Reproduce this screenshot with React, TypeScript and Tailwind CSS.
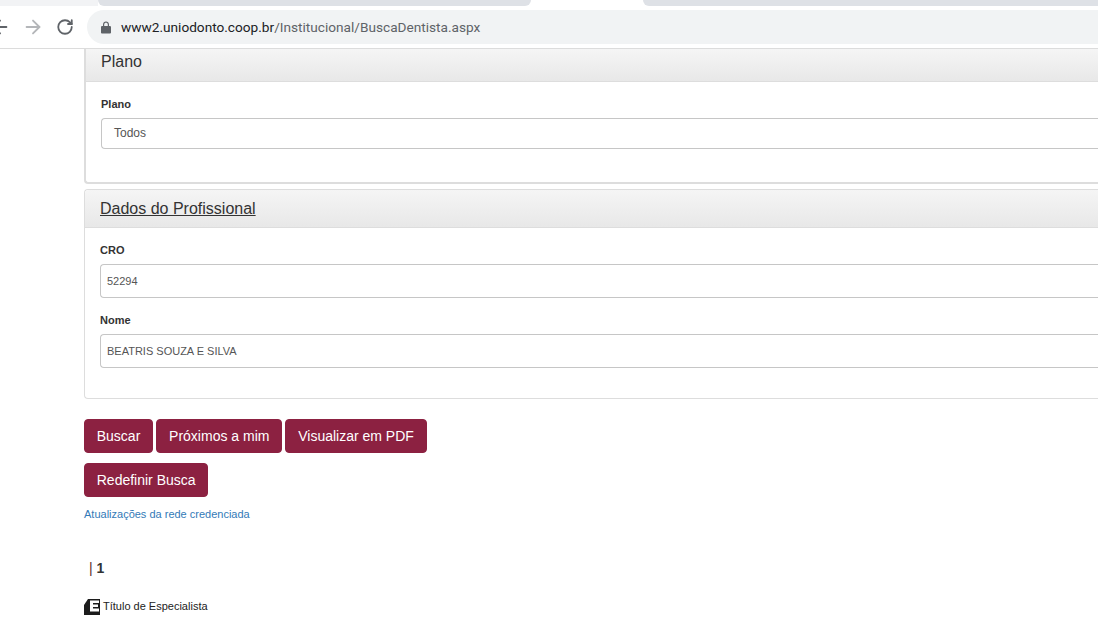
import { ArrowLeft, ArrowRight, RotateCw } from 'lucide-react'

const font = { fontFamily: '"Liberation Sans", Arial, sans-serif' }

// ── Browser chrome ─────────────────────────────────────────────────────────

function BrowserBar() {
  return (
    <div className="h-[49px] bg-white border-b border-[#dcdcdc] overflow-hidden">
      <div className="h-[6px] bg-white flex">
        <div className="w-[98px] bg-[#f2f3f5]" />
        <div className="w-[433px] bg-[#dee1e6] rounded-b-lg" />
        <div className="w-[112px]" />
        <div className="flex-1 bg-[#dee1e6] rounded-bl-lg" />
      </div>
      <div className="flex items-center h-[34px] mt-[4px]">
        <div className="w-[87px] flex items-center shrink-0 text-[#5f6368]">
          <ArrowLeft size={22} strokeWidth={2} className="ml-[-11px] shrink-0" />
          <ArrowRight size={22} strokeWidth={2} className="ml-[11px] shrink-0 text-[#b4b6b9]" />
          <RotateCw size={18} strokeWidth={2.4} className="ml-[12px] shrink-0" />
        </div>
        <div className="flex-1 h-[34px] bg-[#f1f3f4] rounded-l-[17px] flex items-center pl-[14px]">
          <svg width="10" height="13" viewBox="0 0 10 13" className="shrink-0" fill="#5f6368">
            <path d="M1.2 5H2V3.4C2 1.7 3.3.5 5 .5S8 1.7 8 3.4V5h.8c.6 0 1.2.5 1.2 1.1v5.3c0 .6-.6 1.1-1.2 1.1H1.2C.6 12.5 0 12 0 11.4V6.1C0 5.5.6 5 1.2 5ZM3.2 5h3.6V3.4C6.8 2.4 6 1.7 5 1.7S3.2 2.4 3.2 3.4Z" fillRule="evenodd" />
          </svg>
          <span className="ml-[10px] text-[13.65px] text-[#202124]" style={{ fontFamily: 'Roboto, sans-serif' }}>
            www2.uniodonto.coop.br<span className="text-[#5f6368]">/Institucional/BuscaDentista.aspx</span>
          </span>
        </div>
      </div>
    </div>
  )
}

// ── Form pieces ────────────────────────────────────────────────────────────

function Field({ label, value, small }: { label: string; value: string; small?: boolean }) {
  return (
    <div>
      <div className="text-[11px] leading-[16px] font-bold text-[#333]">{label}</div>
      <div
        className={`mt-[6px] bg-white border border-[#c6c6c6] rounded-l-[4px] border-r-0 flex items-center ${
          small ? 'h-[34px] pl-[6px] text-[11px]' : 'h-[31px] pl-[12px] text-[12px] pb-[2px]'
        } text-[#555]`}
      >
        {value}
      </div>
    </div>
  )
}

function PanelHeader({ title, underline, className }: { title: string; underline?: boolean; className: string }) {
  return (
    <div className={`bg-gradient-to-b from-[#f5f5f5] to-[#e8e8e8] border-b border-[#ddd] flex items-center text-[16px] text-[#333] ${className}`}>
      <span className={underline ? 'underline' : ''}>{title}</span>
    </div>
  )
}

function MaroonButton({ children, wide }: { children: string; wide?: boolean }) {
  return (
    <button className={`h-[34px] ${wide ? 'px-[12px]' : 'px-[11.75px]'} bg-[#8c2141] border border-[#8c2141] rounded-[4px] text-white text-[14px]`}>
      {children}
    </button>
  )
}

function SpecialistIcon() {
  return (
    <svg width="16" height="16" viewBox="0 0 16 16" className="shrink-0 block">
      <path d="M0 16V6L4 0H16V16Z" fill="#1c1c1c" />
      <path d="M6 1.5H15V4H9V5.5H14V8H9V9.5H15V12.5H6Z" fill="#fff" />
    </svg>
  )
}

// ── Page ───────────────────────────────────────────────────────────────────

export default function App() {
  return (
    <div className="w-[1098px] h-[630px] overflow-hidden bg-white" style={font}>
      <BrowserBar />
      <div className="pl-[84px]">
        <div className="h-[135px] border-l-2 border-b-2 border-[#ddd] rounded-bl-[4px]">
          <PanelHeader title="Plano" className="h-[33px] pl-[15px] pb-[6px]" />
          <div className="pl-[15px] pt-[14px]">
            <Field label="Plano" value="Todos" />
          </div>
        </div>

        <div className="mt-[5px] h-[210px] border border-[#ddd] border-r-0 rounded-l-[4px]">
          <PanelHeader title="Dados do Profissional" underline className="h-[38px] pl-[15px] rounded-tl-[4px]" />
          <div className="pl-[15px] pt-[14px] flex flex-col gap-[14px]">
            <Field label="CRO" value="52294" small />
            <Field label="Nome" value="BEATRIS SOUZA E SILVA" small />
          </div>
        </div>

        <div className="mt-[20px] flex gap-[3px]">
          <MaroonButton>Buscar</MaroonButton>
          <MaroonButton wide>Próximos a mim</MaroonButton>
          <MaroonButton>Visualizar em PDF</MaroonButton>
        </div>
        <div className="mt-[10px] flex">
          <MaroonButton>Redefinir Busca</MaroonButton>
        </div>
        <div className="mt-[10px] text-[11px] leading-[14px] text-[#337ab7]">Atualizações da rede credenciada</div>

        <div className="mt-[37px] pl-[5px] text-[14px] leading-[20px] font-bold text-[#333]">
          <span className="font-normal text-[#5a2a2a]">|</span> 1
        </div>

        <div className="mt-[21px] flex items-start">
          <SpecialistIcon />
          <span className="ml-[3px] text-[11px] leading-[14px] text-[#222]">Título de Especialista</span>
        </div>
      </div>
    </div>
  )
}
